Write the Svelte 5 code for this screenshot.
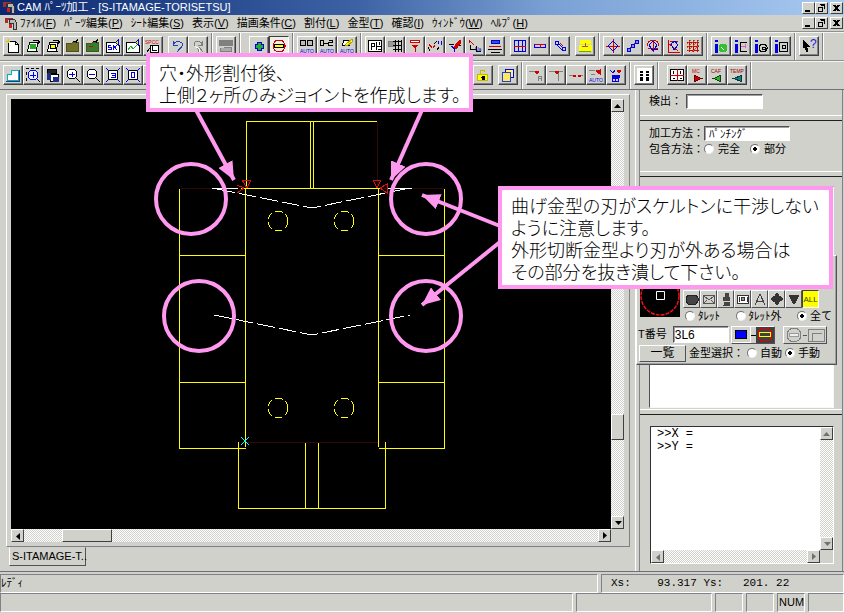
<script lang="ts">
  // one icon is a list of [fill, stroke, path] plus optional [colour, x, y, label]
  type Shape = [string, string, string];
  type Label = [string, number, number, string];
  interface Icon { name: string; shapes: Shape[]; labels?: Label[]; on?: boolean }
  type Group = { icons: Icon[]; after: '' | 'gap' | 'sep' | 'wide' | 'skip' };

  const K = '#000', B = '#0000e0', R = '#d00000', G = '#22b022', Y = '#ffff00', N = 'none', W = '#fff', D = '#808080';

  const ROW1: Group[] = [
    { after: 'gap', icons: [
      { name: '新規', shapes: [[W, K, 'M3.5 3.5h7l3 3v8h-10z'], [N, K, 'M10.5 3.5v3h3'], [N, '#e0c000', 'M1 3.5h4M3.5 1v4']] },
      { name: '開く', shapes: [[W, K, 'M2.5 13.5l2-9h8l-1 9z'], [G, G, 'M5.5 6.5h5v4h-5z'], [N, K, 'M8 2.5h5v3M11 4.5l2 1 2-2M3 13.5h10']] },
      { name: '追加', shapes: [[W, K, 'M2.5 13.5l2-9h8l-1 9z'], [Y, K, 'M5.5 6.5h5v4h-5z'], [N, K, 'M8 2.5h5v3M11 4.5l2 1 2-2M3 13.5h10']] },
      { name: '保存', shapes: [['#707028', '#505018', 'M1.5 5.5h5l1-1h6v9h-12z'], [N, K, 'M8 3.5h3l2-2M11 5v-3']] },
      { name: '別名保存', shapes: [['#308030', '#505018', 'M1.5 5.5h5l1-1h6v9h-12z'], [N, R, 'M4 8.5h4'], [N, K, 'M8 3.5h3l2-2M11 5v-3']] },
      { name: 'シート', shapes: [[W, K, 'M1.5 4.5h10l3 3v7h-13z'], [N, B, 'M6 7H3v2h3v2H3M8 12V7l4 5M12 7l-3 3'], ['#e8e800', B, 'M10.5 4.5l3-3v6z']] },
      { name: 'グラフ', shapes: [[W, K, 'M1.5 4.5h10l3 3v7h-13z'], [N, G, 'M3 12l3-4 2 3 4-4'], ['#e8e800', B, 'M10.5 4.5l3-3v6z']] },
      { name: '材質', shapes: [[W, K, 'M5.5 7.5h8v7h-8z'], [N, K, 'M2 14l3-4M7 8v4h5']], labels: [[R, 0, 6, 'SPCC']] },
    ] },
    { after: 'sep', icons: [
      { name: '元に戻す', shapes: [[N, '#2040c0', 'M3.5 7c0-4 9-5 9 0 0 3-4 3-5 7M3.5 3v4h4']] },
      { name: 'やり直し', shapes: [[N, D, 'M12 7c0-4-8-5-8-1 0 4 5 2 5 8M12 3v4H8M9 9l4 5'], [N, W, 'M5 8c2 3 5 1 5 6']] },
    ] },
    { after: 'wide', icons: [{ name: '印刷', shapes: [[D, D, 'M1.5 2.5h13v5h-13z'], ['#aaa', D, 'M5.5 9.5h8v4h-11v-4']] }] },
    { after: 'sep', icons: [
      { name: '穴', shapes: [['#20b030', B, 'M6.5 4.5h4v2h2v4h-2v2h-4v-2h-2v-4h2z']] },
      { name: '金型', on: true, shapes: [[N, R, 'M8 2a6 6 0 1 0 .1 0'], [Y, K, 'M3.5 6.5h9v3h-9z']] },
    ] },
    { after: 'sep', icons: [
      { name: '自動割付', shapes: [['#bbb', K, 'M1.5 2.5h5v5h-5zM8.5 2.5h5v5h-5z']], labels: [[B, 1, 15, 'AUTO']] },
      { name: '自動連結', shapes: [[N, K, 'M1.5 2.5h3v5h-3zM4.5 5h5M9.5 2.5h4v2h-4v3h4']], labels: [[B, 1, 15, 'AUTO']] },
      { name: '自動加工', shapes: [[W, K, 'M4.5 2.5h7l-1 5h-7z'], [Y, '#b0a000', 'M6 7l7-6 1 2-6 5z']], labels: [[B, 1, 15, 'AUTO']] },
    ] },
    { after: 'gap', icons: [
      { name: '配置', shapes: [[W, K, 'M1.5 2.5h13v11h-13z'], [N, K, 'M4.5 5v7M4 5.5h3v3h-3M9.5 4v8M9 8.5h5M12.5 4v3M11 11.5h3']] },
      { name: '格子', shapes: [['#999', D, 'M1.5 3.5h7v5h-7z'], [N, K, 'M6 3.5h9M6 7.5h9M6 11.5h9M8.5 2v12M11.5 2v12M14.5 2v12']] },
      { name: '単穴', shapes: [[W, R, 'M3.5 2.5h9v2h-9z'], [R, R, 'M5 7h6l-3 3zM8 10v4']] },
      { name: '斜め', shapes: [[N, R, 'M2 6l3 4M6 10l2-3'], [N, K, 'M1 9l2 4M7 6l3-3M10 12l2-3'], [B, B, 'M11.5 2.5v3M14.5 2.5v4']] },
      { name: '編集', shapes: [[N, K, 'M2 6h5M9 7h5'], [R, R, 'M7 9l6-7 1 2-5 7z'], [N, B, 'M4 8l4 3-1 3']] },
      { name: '番号', shapes: [[N, R, 'M2 2l5 5M2 2v3'], [N, K, 'M3.5 7v4h5M9.5 8v5h4']], labels: [[B, 8, 13, 'Ua']] },
      { name: '平行', shapes: [['#3a50c8', B, 'M4.5 2.5h8v3h-8z'], [N, R, 'M2 8.5h12'], [N, K, 'M1 11.5h14M4 14.5h9']] },
    ] },
    { after: 'gap', icons: [
      { name: '表', shapes: [[N, B, 'M2.5 2.5h11v11h-11zM6.5 2v12M10.5 2v12'], [N, R, 'M2 8.5h12']] },
      { name: '一列', shapes: [['#c0c8ff', B, 'M2.5 6.5h11v3h-11z'], [N, R, 'M3 6.5h10M8 6v4']] },
      { name: '連結', shapes: [[N, B, 'M3.5 3.5h3v3h-3zM7 6l4 4M5 7l5 5M10.5 9.5h3v3h-3z'], [N, R, 'M8 5l3 3']] },
    ] },
    { after: 'sep', icons: [{ name: '寸法', shapes: [[Y, Y, 'M3 2h10v3H3zM2 7h12v5H2z'], [N, '#a06000', 'M5 8.5h6M8 5v3'], [N, '#60b000', 'M2 13.5h12']] }] },
    { after: 'sep', icons: [
      { name: '円', shapes: [[N, R, 'M8 1v14M1 8.5h14'], [N, B, 'M8 3l5 5-5 5-5-5z']] },
      { name: '線', shapes: [[N, R, 'M2 13l12-11'], ['#8090ff', B, 'M2.5 10.5h3v3h-3zM6.5 6.5h3v3h-3zM10.5 2.5h3v3h-3z']] },
      { name: '円弧', shapes: [[N, R, 'M2 8c0-8 12-8 12 0M3 10h10M8 2v12'], [N, B, 'M4 7l4-4 4 4-4 6zM10 11h3']] },
      { name: '角', shapes: [[N, R, 'M3.5 2v12h11M3 5l10 8M5 3h8'], [N, B, 'M6 6l4-3 3 4-4 5z']] },
      { name: '網', shapes: [[N, R, 'M4.5 2v12M8.5 2v12M12.5 2v12M2 4.5h12M2 8.5h12M2 12.5h12'], [N, '#b06030', 'M2 6l4-4M2 10l8-8M3 13L14 2M7 14l7-7']] },
    ] },
    { after: 'sep', icons: [
      { name: '情報 円', shapes: [[B, B, 'M2 2h2v1H2zM2 6h2v8H2z'], ['#30c030', '#30c030', 'M10 6a4 4 0 1 0 .1 0'], [N, W, 'M8 9l3 3']] },
      { name: '情報 線', shapes: [[B, B, 'M2 2h2v1H2zM2 6h2v8H2z'], [N, K, 'M14 4.5H7.5v9H14'], [N, '#d060d0', 'M8 8.5h5M12 6v4']] },
      { name: '情報 穴', shapes: [[B, B, 'M2 2h2v1H2zM2 6h2v8H2z'], [N, K, 'M10 6a4 4 0 1 0 .1 0M9 9h3v2H9z']] },
      { name: '情報 型', shapes: [[B, B, 'M2 2h2v1H2zM2 6h2v8H2z'], [N, K, 'M6.5 4.5h8v9h-8zM9 7h3v3H9z']] },
    ] },
    { after: 'sep', icons: [{ name: 'ヘルプ', shapes: [[K, K, 'M2 2l6 6H5l2 5-1 1-2-5-2 1z']], labels: [['#2020e0', 9, 10, '?']] }] },
  ];

  const ROW2: Group[] = [
    { after: 'skip', icons: [
      { name: '全体', shapes: [['#fff', '#00b0c0', 'M2.5 7.5h4v-4h7v10h-11z'], [N, '#204080', 'M1 14.5h13v-12']] },
      { name: '範囲', shapes: [['#e8f0ff', B, 'M8 3a5 5 0 1 0 .1 0M8 5v6M5 8.5h6'], [N, K, 'M1 1.5h3M6 1.5h3M11 1.5h3M1.5 5v3M1.5 11v3M12 12l3 3']] },
      { name: '戻る', shapes: [['#222', K, 'M2 2h9v4H2z'], [W, K, 'M5.5 7.5h8v7h-8z'], ['#203080', '#203080', 'M2 6h3v6H2zM8 10h5v4H8z']] },
      { name: '拡大', shapes: [[W, K, 'M7 2a5 5 0 1 0 .1 0M11 11l4 4'], [N, B, 'M4 7.5h6M7.5 5v5']] },
      { name: '縮小', shapes: [[W, K, 'M7 2a5 5 0 1 0 .1 0M11 11l4 4'], [N, B, 'M4 7.5h6']] },
      { name: '前画面', shapes: [[W, K, 'M3.5 3.5h9v9h-9z'], [N, B, 'M6 6.5h4v4H6M7 8.5h3M1 1l3 3M15 1l-3 3M1 15l3-3M15 15l-3-3']] },
      { name: '枠', shapes: [[W, K, 'M3.5 3.5h9v9h-9z'], [N, B, 'M6.5 5.5h3v5h-3zM1 1l3 3M15 1l-3 3M1 15l3-3M15 15l-3-3']] },
      { name: '再描画', shapes: [[W, K, 'M3.5 3.5h9v9h-9z']] },
    ] },
    { after: 'gap', icons: [{ name: 'ロック', shapes: [[Y, '#c8b800', 'M2.5 7.5h10v6h-10z'], [N, '#c8b800', 'M5.5 7V3.5h4V5'], [K, K, 'M7 9h2v3H7zM6 10h4']] }] },
    { after: 'sep', icons: [{ name: '複写', shapes: [['#fff080', B, 'M5.5 2.5h8v8h-8z'], ['#ffe860', '#2040d0', 'M2.5 5.5h8v9h-8z']] }] },
    { after: 'sep', icons: [
      { name: '接合 A', shapes: [[N, D, 'M1 4.5h6M10.5 14V9.5h3V14M10 11.5h4'], [R, R, 'M7 4h4l-2 3z']] },
      { name: '接合 B', shapes: [[N, D, 'M1 4.5h6M10.5 6v8'], [R, R, 'M7 4h5l-3 3z'], [N, D, 'M11 4.5h4']] },
      { name: '接合 C', shapes: [[N, D, 'M1 8.5h5M11 8.5h4'], [R, R, 'M5 8h2v1H5zM10 8h2v1h-2z']] },
      { name: '接合自動', shapes: [[N, D, 'M1 3.5h6M3 7h4'], [R, R, 'M8 4l4 3v-4z']], labels: [[B, 1, 15, 'AUTO']] },
      { name: '接合設定', shapes: [[N, B, 'M2 3l3 3 2-3M4.5 8v6h6v-6zM4 11.5h7M7.5 8v6'], [R, R, 'M9 3h4l-2 3z'], [B, B, 'M4 8h7v2H4z']] },
    ] },
    { after: 'wide', icons: [{ name: '検索', shapes: [[W, W, 'M1 1h14v14H1z'], [K, K, 'M4 7h2v6H4zM10 7h2v6h-2zM4 4h2v1H4zM10 4h2v1h-2z'], [N, W, 'M3 9.5h4M9 9.5h4']] }] },
    { after: 'sep', icons: [
      { name: '原点', shapes: [[W, K, 'M1.5 2.5h13v11h-13z'], [N, R, 'M8 2v12M1 8.5h14'], [N, K, 'M4.5 4v3M11.5 4v3M4 11.5h2M11 11.5h2']] },
      { name: 'MC', shapes: [[R, '#600', 'M5.5 8.5l7 3-7 3z']], labels: [[R, 3, 6, 'MC']] },
      { name: 'CAF', shapes: [['#30b030', '#064006', 'M11.5 8.5l-7 3 7 3z']], labels: [['#a00000', 2, 6, 'CAF']] },
      { name: 'TEMP', shapes: [['#108080', '#043838', 'M12.5 8.5l-8 3 8 3z']], labels: [['#a00000', 1, 6, 'TEMP']] },
    ] },
  ];

  const DIES: Icon[] = [
    { name: '丸', shapes: [['#444', '#222', 'M4 4h8l2 3v3l-2 3H4l-2-3V7z']] },
    { name: '角', shapes: [[N, '#555', 'M2.5 4.5h11v8h-11zM3 5l5 4 5-4M3 12l3-3M13 12l-3-3']] },
    { name: '長穴', shapes: [['#444', '#444', 'M7 2h3v3H7zM5 6h6v3H5zM7 11h4v3H6z']] },
    { name: '長角', shapes: [[W, '#333', 'M2.5 4.5h11v8h-11z'], ['#999', '#333', 'M8 6a2 2 0 1 0 .1 0M4 6v5M12 6v5']] },
    { name: '三角', shapes: [[N, '#444', 'M3 14L8 3l5 11M5 10h6']] },
    { name: '菱形', shapes: [['#333', '#333', 'M8 2l2 3 4 3-4 3-2 3-2-3-4-3 4-3z']] },
    { name: '特殊', shapes: [['#333', '#333', 'M3 4h10L9 12H7z']] },
  ];

  const MENUS = [
    { label: 'ﾌｧｲﾙ', key: 'F' },
    { label: 'ﾊﾟｰﾂ編集', key: 'P' },
    { label: 'ｼｰﾄ編集', key: 'S' },
    { label: '表示', key: 'V' },
    { label: '描画条件', key: 'C' },
    { label: '割付', key: 'L' },
    { label: '金型', key: 'T' },
    { label: '確認', key: 'I' },
    { label: 'ｳｨﾝﾄﾞｳ', key: 'W' },
    { label: 'ﾍﾙﾌﾟ', key: 'H' },
  ];

  let contain = $state('part');
  let turret = $state('all');
  let select = $state('manual');
  let punch = $state('ﾊﾟﾝﾁﾝｸﾞ');
  let dieNo = $state('3L6');
  let find = $state('');
</script>

{#snippet picture(icon: Icon)}
  <svg class="icon" viewBox="0 0 16 16" aria-hidden="true">
    {#each icon.shapes as [fill, stroke, d]}
      <path {fill} {stroke} {d} />
    {/each}
    {#each icon.labels ?? [] as [colour, x, y, text]}
      <text {x} {y} fill={colour} font-size={text === '?' ? 12 : 5}>{text}</text>
    {/each}
  </svg>
{/snippet}

{#snippet toolbar(groups: Group[], label: string)}
  <div class="toolbar" role="toolbar" aria-label={label}>
    {#each groups as group}
      {#each group.icons as icon}
        <button class="tool" class:on={icon.on} aria-label={icon.name}>{@render picture(icon)}</button>
      {/each}
      <span class="space {group.after}"></span>
    {/each}
  </div>
{/snippet}

{#snippet logo()}
  <svg class="logo" viewBox="0 0 14 13" aria-hidden="true">
    <path fill="#a03030" d="M1 1h8v2H1zM1 3h3v3H1z" />
    <path fill="#b8b8b8" stroke="#333" d="M5.5 2.5h5l2 3v7h-3v-6h-4z" />
    <path fill="#d02020" d="M5 7h3v4H5z" />
  </svg>
{/snippet}

{#snippet windowButtons()}
  <div class="winbtns">
    <button aria-label="最小化"><svg viewBox="0 0 9 8"><path fill="#000" d="M1 6h5v2H1z" /></svg></button>
    <button aria-label="元に戻す"><svg viewBox="0 0 9 8"><path fill="none" stroke="#000" d="M3.5 1.5h4v3M1.5 3.5h4v4h-4zM3 .5h5M1 3.5h5" /></svg></button>
    <button class="close" aria-label="閉じる"><svg viewBox="0 0 9 8"><path fill="none" stroke="#000" stroke-width="2" d="M2 1l5 6M7 1L2 7" /></svg></button>
  </div>
{/snippet}

{#snippet arrow(dir: string)}
  <button class="arrow {dir}" aria-label={dir}><svg viewBox="0 0 8 8"><path d="M0 6h7L3.5 2z" /></svg></button>
{/snippet}

<div class="app">
  <header class="titlebar">
    {@render logo()}
    <h1>CAM ﾊﾟｰﾂ加工 - [S-ITAMAGE-TORISETSU]</h1>
    {@render windowButtons()}
  </header>

  <nav class="menubar">
    {@render logo()}
    {#each MENUS as menu}
      <button>{menu.label}(<u>{menu.key}</u>)</button>
    {/each}
    {@render windowButtons()}
  </nav>

  {@render toolbar(ROW1, '標準')}
  {@render toolbar(ROW2, '表示')}

  <main class="work">
    <section class="document">
      <div class="view">
        <div class="canvas">
          <svg width="600" height="431" viewBox="11 99 600 431" role="img" aria-label="展開図">
            <g class="part">
              <path d="M246.5 188V121.5H377M310.5 121V188M313.5 121V188M241 188.5H381" />
              <path d="M245.5 188V447M378.5 188V447M179.5 189V448.5H245.5M444.5 189V448.5H378.5" />
              <path d="M179 255.5H245M378 255.5H444M179 382.5H245M378 382.5H444" />
              <path d="M238.5 442V508.5H385.5V442M305.5 442V508M318.5 442V508" />
            </g>
            <path class="faint" d="M377.5 122V188M181 188.5H240M384 188.5H444M247 442.5H378" />
            <g class="holes">
              <circle cx="278" cy="221" r="10" /><circle cx="344" cy="221" r="10" />
              <circle cx="278" cy="408" r="10" /><circle cx="344" cy="408" r="10" />
            </g>
            <path class="bend" d="M217 189L312 208L405 189M214 315L312 335L410 315" />
            <path class="bend-end" d="M212 188.5H238M388 188.5H412" />
            <path class="joint" d="M242 180h9l-4 8zM237 185l7 3-7 5M373 180h8l-4 8zM387 184v9l-7-5z" />
            <path class="origin" d="M241 437l8 8M249 437l-8 8" />
          </svg>
        </div>
        <div class="bar vertical">
          {@render arrow('up')}
          <span class="thumb"></span>
          {@render arrow('down')}
        </div>
        <div class="bar horizontal">
          {@render arrow('left')}
          <span class="thumb"></span>
          {@render arrow('right')}
        </div>
      </div>
      <div class="tabs"><button class="tab">S-ITAMAGE-T..</button></div>
    </section>

    <aside class="panel">
      <div class="block find">
        <label for="find">検出：</label>
        <input id="find" class="field" bind:value={find} />
      </div>
      <div class="block method">
        <div class="row">
          <label for="punch">加工方法：</label>
          <input id="punch" class="field" bind:value={punch} />
        </div>
        <div class="row">
          <span>包含方法：</span>
          <label><input type="radio" value="whole" bind:group={contain} />完全</label>
          <label><input type="radio" value="part" bind:group={contain} />部分</label>
        </div>
      </div>
      <div class="block list"><div class="listbox"></div></div>
      <div class="block console">
        <div class="output">
          <textarea readonly aria-label="座標" value={'>>X =\n>>Y ='}></textarea>
          <div class="bar vertical dim">{@render arrow('up')}{@render arrow('down')}</div>
          <div class="bar horizontal dim">{@render arrow('left')}{@render arrow('right')}</div>
        </div>
      </div>

      <div class="dies" role="dialog" aria-label="金型">
        <div class="diehead">
          <svg class="preview" viewBox="0 0 40 41" aria-hidden="true">
            <path fill="#000" d="M0 0h40v41H0z" />
            <circle cx="20" cy="20" r="19" fill="none" stroke="#f01010" stroke-width="1.5" stroke-dasharray="4 1" />
            <path fill="none" stroke="#fff" d="M16.5 15.5h8v8h-8z" />
          </svg>
          <div class="diepick">
            <div class="dietools">
              {#each DIES as die}
                <button class="die" aria-label={die.name}>{@render picture(die)}</button>
              {/each}
              <button class="die all">ALL</button>
            </div>
            <div class="row turret">
              <label><input type="radio" value="in" bind:group={turret} />ﾀﾚｯﾄ</label>
              <label><input type="radio" value="out" bind:group={turret} />ﾀﾚｯﾄ外</label>
              <label><input type="radio" value="all" bind:group={turret} />全て</label>
            </div>
          </div>
        </div>
        <div class="row number">
          <label for="dieno">T番号</label>
          <input id="dieno" class="field" bind:value={dieNo} />
          <button class="pair" aria-label="角金型">
            <svg viewBox="0 0 42 16"><path fill="#404040" d="M24 0h18v16H24z" /><path fill="#0000ff" stroke="#000" d="M3.5 3.5h11v8h-11z" /><path fill="none" stroke="#fff" d="M1 15.5h17V0" /><path stroke="#000" d="M19 8.5h5" /><circle cx="33" cy="8" r="7" fill="none" stroke="#e00000" /><path fill="none" stroke="#ff0" d="M27.5 5.500h11v4h-11z" /></svg>
          </button>
          <button class="pair" aria-label="丸金型">
            <svg viewBox="0 0 42 16"><circle cx="10" cy="8" r="7" fill="none" stroke="#808080" /><path fill="#eee" stroke="#999" d="M5.5 6.5h9v3h-9z" /><path stroke="#555" d="M19 8.5h4" /><path fill="none" stroke="#808080" d="M24.5 14.5v-12h16v12zM28 14V6h10" /></svg>
          </button>
        </div>
        <div class="row choose">
          <button class="listbtn">一覧</button>
          <span>金型選択：</span>
          <label><input type="radio" value="auto" bind:group={select} />自動</label>
          <label><input type="radio" value="manual" bind:group={select} />手動</label>
        </div>
      </div>
    </aside>
  </main>

  <footer>
    <div class="status">
      <span class="cell grow">ﾚﾃﾞｨ</span>
      <span class="cell coords">Xs:    93.317 Ys:   201. 22</span>
    </div>
    <div class="status keys">
      <span class="cell grow"></span>
      <span class="cell mid"></span>
      <span class="cell key"></span>
      <span class="cell key"></span>
      <span class="cell key">NUM</span>
      <span class="cell key"></span>
    </div>
  </footer>

  <svg class="marks" width="844" height="613" viewBox="0 0 844 613" aria-hidden="true">
    <defs>
      <marker id="head" viewBox="0 0 18 16" refX="18" refY="8" markerWidth="18" markerHeight="16" markerUnits="userSpaceOnUse" orient="auto">
        <path d="M0 0L18 8L0 16z" />
      </marker>
    </defs>
    <circle cx="191" cy="199" r="35" />
    <circle cx="199" cy="316" r="35" />
    <circle cx="426" cy="199" r="35" />
    <circle cx="426" cy="316" r="35" />
    <path class="pointer" d="M196 110L234 180" />
    <path class="pointer" d="M422 110L391 180" />
    <path class="pointer" d="M500 226L422 195" />
    <path class="pointer" d="M500 242L422 305" />
  </svg>
  <p class="note first">穴・外形割付後、<br />上側２ヶ所のみジョイントを作成します。</p>
  <p class="note second">曲げ金型の刃がスケルトンに干渉しない<br />ように注意します。<br />外形切断金型より刃が外ある場合は<br />その部分を抜き潰して下さい。</p>
</div>

<style>
  :global(body) { margin: 0; }
  .app {
    --face: #d1d1cb;
    --shade: #808088;
    position: relative; display: flex; flex-direction: column;
    min-height: 100vh; overflow: hidden;
    background: var(--face); color: #000;
    font: 11px/13px "Liberation Sans", "Noto Sans CJK JP", sans-serif;
  }
  .app :global(*) { box-sizing: border-box; }
  button, input, textarea { font: inherit; color: inherit; }
  button { padding: 0; border: none; background: var(--face); }

  .titlebar {
    display: flex; align-items: center; gap: 1px; height: 15px; padding: 0 1px 0 2px;
    background: linear-gradient(90deg, #0c2870, #3c62a4 42%, #7ba0d4 65%, #a6caf0);
    color: #fff;
  }
  h1 { margin: 0; font-size: 11px; line-height: 13px; font-weight: 400; white-space: nowrap; }
  .logo { width: 14px; height: 13px; flex: none; shape-rendering: crispEdges; }
  .winbtns { display: flex; margin-left: auto; }
  .winbtns button {
    display: grid; place-items: center; width: 13px; height: 12px;
    border: 1px solid; border-color: #fff #404040 #404040 #fff;
  }
  .winbtns .close { margin-left: 2px; }
  .winbtns svg { width: 9px; height: 8px; shape-rendering: crispEdges; }
  .menubar { display: flex; align-items: center; gap: 8px; height: 16px; padding: 0 1px 0 4px; }
  .menubar .logo { margin-right: -6px; }
  .menubar > button { white-space: nowrap; }

  .toolbar {
    display: flex; align-items: center; height: 29px; padding-left: 3px;
    border-top: 1px solid #909090; box-shadow: inset 0 1px #f4f4f0;
  }
  .tool {
    width: 20px; height: 20px; flex: none; display: grid; place-items: center;
    border: 1px solid; border-color: #fff #404040 #404040 #fff;
    box-shadow: inset -1px -1px var(--shade);
  }
  .tool.on { background: #eeeeea; border-color: #404040 #fff #fff #404040; box-shadow: none; }
  .icon { width: 16px; height: 16px; shape-rendering: crispEdges; font-family: "Liberation Sans", sans-serif; }
  .space { flex: none; width: 5px; }
  .space.sep, .space.wide { width: 8px; height: 27px; background: linear-gradient(90deg, transparent 3px, #808088 3px 4px, #fff 4px 5px, transparent 5px); }
  .space.wide { width: 13px; }
  .space.skip { width: 310px; }

  .work { flex: 1; display: flex; min-height: 482px; border-top: 1px solid #707078; }
  .document { flex: 1; min-width: 0; display: flex; flex-direction: column; padding: 4px 5px 3px 6px; border-right: 1px solid #fff; }
  .view {
    flex: 1; display: grid; grid-template: 1fr 13px / 1fr 13px;
    padding: 4px 5px 4px 4px; border: 1px solid; border-color: #fff var(--shade) var(--shade) #fff;
  }
  .canvas { background: #000; overflow: hidden; min-height: 0; position: relative; }
  .canvas svg { position: absolute; left: 0; top: 0; shape-rendering: crispEdges; fill: none; }
  .part { stroke: #ffff00; }
  .holes { stroke: #ffff00; stroke-dasharray: 8 3; }
  .faint { stroke: #300808; }
  .bend { stroke: #fff; stroke-dasharray: 18 4; }
  .bend-end { stroke: #fff; }
  .joint { stroke: #e01010; }
  .origin { stroke: #00ffff; }

  .bar { display: flex; background: repeating-conic-gradient(#fff 0 25%, #d1d1cb 0 50%) 0 0 / 2px 2px; }
  .bar.vertical { flex-direction: column; justify-content: space-between; }
  .bar.horizontal { justify-content: space-between; }
  .arrow, .thumb { flex: none; border: 1px solid; border-color: #fff #404040 #404040 #fff; background: var(--face); }
  .arrow { width: 13px; height: 13px; display: grid; place-items: center; }
  .arrow svg { width: 8px; height: 8px; }
  .down svg { transform: rotate(180deg); }
  .left svg { transform: rotate(270deg); }
  .right svg { transform: rotate(90deg); }
  .dim path { fill: #707070; }
  .vertical .thumb { height: 26px; margin-top: auto; margin-bottom: 76px; }
  .horizontal .thumb { width: 50px; margin-left: 38px; margin-right: auto; }
  .tabs { height: 21px; padding-left: 3px; }
  .tab { width: 77px; height: 19px; text-align: left; padding-left: 2px; white-space: nowrap; border: 1px solid; border-color: transparent #505058 #505058 #fff; }

  .panel { position: relative; width: 204px; margin-left: 3px; flex: none; display: flex; flex-direction: column; border: 1px solid var(--shade); border-top: none; border-bottom: none; margin-right: 1px; }
  .block { border-bottom: 1px solid #202020; box-shadow: inset 0 -4px var(--face), inset 0 -5px #fff; padding: 4px 9px; }
  .find { height: 31px; display: flex; align-items: flex-start; }
  .field { border: 1px solid; border-color: #505058 #fff #fff #505058; box-shadow: inset 1px 1px #a0a0a0; background: #fff; height: 15px; padding: 0 4px; min-width: 0; border-radius: 0; outline: none; }
  #find { width: 77px; margin-left: 4px; }
  .find label { line-height: 15px; }
  .method { height: 56px; padding-top: 4px; }
  .row { display: flex; align-items: center; white-space: nowrap; height: 16px; }
  .row label { display: flex; align-items: center; }
  #punch { width: 86px; }
  .method .row label + label { margin-left: 10px; }
  input[type='radio'] {
    appearance: none; width: 10px; height: 10px; margin: 0 4px 0 0; border-radius: 50%;
    border: 1px solid; border-color: #707070 #f0f0f0 #f0f0f0 #707070;
    background: #fff; flex: none;
  }
  input[type='radio']:checked { background: radial-gradient(#000 0 2px, #fff 2px); }
  .list { height: 238px; padding: 9px 8px 6px 9px; }
  .listbox { height: 100%; background: #fff; border: 1px solid; border-color: #505058 #f8f8f8 #f8f8f8 #505058; }
  .console { flex: 1; padding: 11px 8px 7px 10px; border: none; box-shadow: none; display: flex; }
  .output {
    flex: 1; display: grid; grid-template: 1fr 13px / 1fr 13px;
    border: 1px solid; border-color: #303038 #fff #fff #303038; box-shadow: inset 1px 1px var(--shade);
  }
  textarea { width: 100%; resize: none; border: none; outline: none; padding: 1px 6px; background: #fff; overflow: hidden; font: 12px/13px "Liberation Mono", monospace; margin: 0; }

  .dies {
    position: absolute; left: -4px; top: 165px; width: 201px; height: 110px; padding: 20px 4px 1px 3px;
    background: var(--face); border: 1px solid; border-color: #fff #505058 #505058 #fff; box-shadow: inset -1px -1px #a0a0a0;
  }
  .diehead { display: flex; gap: 3px; height: 49px; }
  .preview { width: 40px; height: 41px; flex: none; }
  .diepick { flex: 1; }
  .dietools { display: flex; margin-top: 14px; }
  .die { width: 17px; height: 18px; flex: none; display: grid; place-items: center; overflow: hidden; border: 1px solid; border-color: #fff #505058 #505058 #fff; }
  .die.all { background: #ffff00; border-color: #404040 #fff #fff #404040; font-size: 8px; color: #404000; }
  .turret { justify-content: space-between; padding-left: 2px; }
  .turret input, .choose input { margin-right: 3px; }
  .number { height: 19px; margin-left: -2px; }
  .number .field { width: 56px; height: 17px; margin-left: 6px; margin-right: 2px; padding: 0 1px; font-size: 12px; }
  .pair { width: 44px; height: 18px; border: 1px solid; border-color: #fff #505058 #505058 #fff; margin-right: 8px; flex: none; }
  .pair + .pair { margin-right: 0; }
  .pair svg { display: block; width: 42px; height: 16px; shape-rendering: crispEdges; }
  .choose { height: 18px; gap: 3px; margin-left: -1px; }
  .listbtn { width: 47px; height: 17px; border: 1px solid; border-color: #fff #505058 #505058 #fff; font-size: 12px; }

  footer { border-top: 1px solid #707078; padding-top: 2px; }
  .status { display: flex; height: 19px; gap: 3px; }
  .cell { border: 1px solid; border-color: var(--shade) #fff #fff var(--shade); line-height: 17px; overflow: hidden; white-space: pre; }
  .grow { flex: 1; }
  .coords { width: 243px; padding-left: 9px; font-family: "Liberation Mono", monospace; }
  .keys { height: 21px; padding-bottom: 2px; }
  .mid { width: 136px; }
  .key { width: 28px; padding-left: 1px; }
  .keys .key:last-child { width: 36px; }

  .marks { position: absolute; left: 0; top: 0; pointer-events: none; fill: none; stroke: #ff99f0; stroke-width: 4px; }
  .marks marker path { fill: #ff99f0; stroke: none; }
  .pointer { marker-end: url(#head); }
  .note {
    position: absolute; margin: 0; padding: 6px 9px; background: #fff; border: 4px solid #ff99f0;
    font: 300 18px/22px "Liberation Sans", "Noto Sans CJK JP", sans-serif; font-feature-settings: "palt"; white-space: nowrap;
  }
  .first { left: 146px; top: 53px; width: 327px; height: 59px; }
  .second { left: 498px; top: 186px; width: 335px; height: 103px; }
</style>
